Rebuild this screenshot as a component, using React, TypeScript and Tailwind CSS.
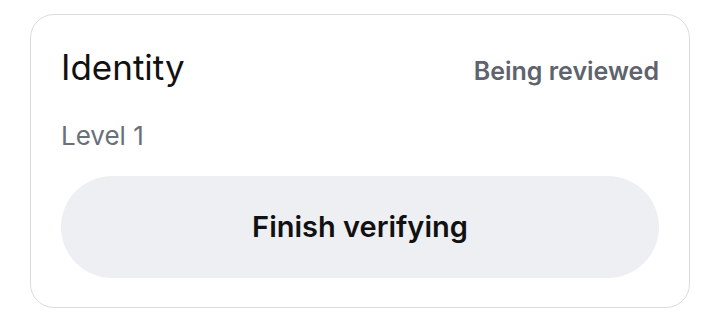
export default function App() {
  return (
    <div className="w-[720px] h-[322px] bg-white p-[14px_30px]" style={{ fontFamily: "Inter, 'Noto Sans', sans-serif" }}>
      <div className="h-[294px] rounded-[24px] border border-[#dcdcdf] px-[30px] pt-[32px]">
        <div className="flex items-baseline justify-between">
          <div className="text-[35px] leading-[41px] text-[#111111]">Identity</div>
          <div className="text-[25px] leading-[30px] font-semibold text-[#5f636d]">Being reviewed</div>
        </div>
        <div className="mt-[32px] text-[26px] leading-[32px] text-[#6b6f78]">Level 1</div>
        <button className="mt-[24px] w-full h-[102px] rounded-full bg-[#eeeff2] text-[29px] font-semibold text-[#111111]">
          Finish verifying
        </button>
      </div>
    </div>
  );
}
